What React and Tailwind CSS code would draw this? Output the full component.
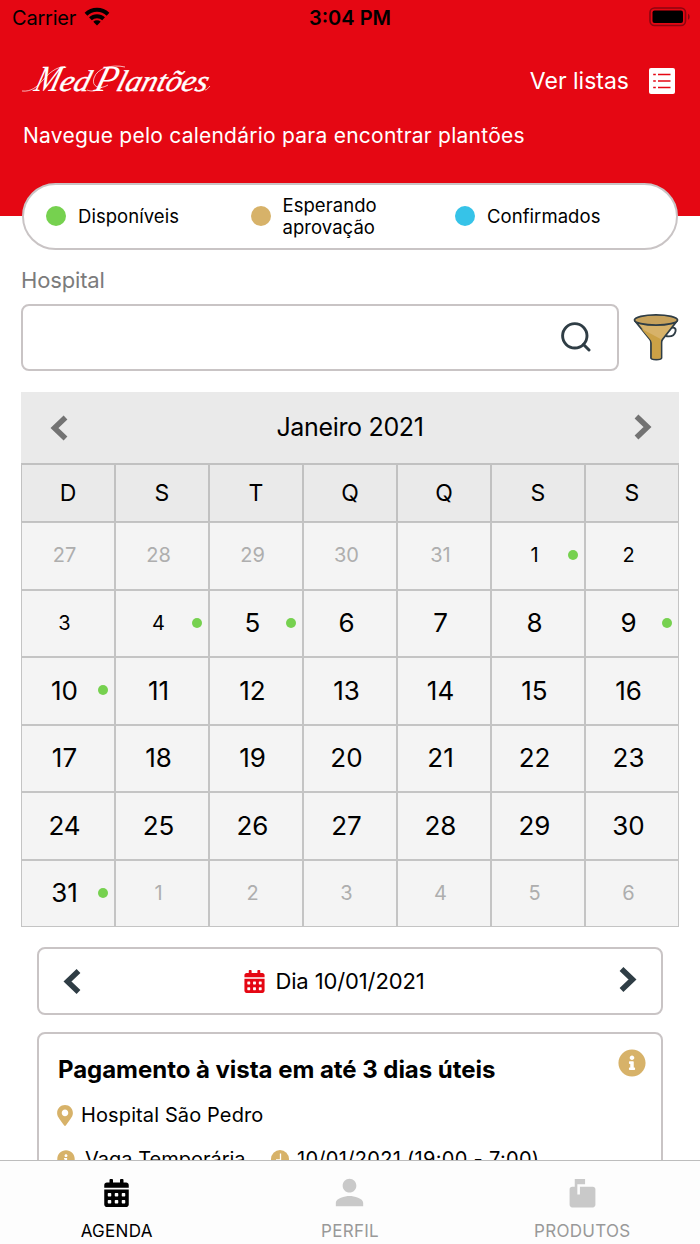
import { FaCalendarAlt, FaInfoCircle, FaMapMarkerAlt } from "react-icons/fa";
import { MdPerson, MdMarkunreadMailbox } from "react-icons/md";

const weekDays = ["D", "S", "T", "Q", "Q", "S", "S"];

const weeks = [
  [27, 28, 29, 30, 31, 1, 2],
  [3, 4, 5, 6, 7, 8, 9],
  [10, 11, 12, 13, 14, 15, 16],
  [17, 18, 19, 20, 21, 22, 23],
  [24, 25, 26, 27, 28, 29, 30],
  [31, 1, 2, 3, 4, 5, 6],
];

const available = [1, 4, 5, 9, 10, 31];

const days = weeks.flatMap((week, row) =>
  week.map((day) => {
    const outside = (row === 0 && day > 7) || (row === 5 && day < 7);
    return {
      day,
      outside,
      past: !outside && day < 5,
      dot: !outside && available.includes(day),
    };
  })
);

const legend = [
  { label: "Disponíveis", color: "bg-[#76d14f]" },
  { label: "Esperando aprovação", color: "bg-[#d7b269]" },
  { label: "Confirmados", color: "bg-[#36c3e8]" },
];

function Chevron({ right, className }) {
  return (
    <svg viewBox="0 0 18 26" fill="none" stroke="currentColor" strokeWidth="5.5" className={className}>
      <path d={right ? "M2.5 2.5 13.5 13 2.5 23.5" : "M15.5 2.5 4.5 13l11 10.5"} />
    </svg>
  );
}

function StatusBar() {
  return (
    <div className="grid h-9 grid-cols-3 items-center pl-3 pr-[9px] text-[20px] text-black">
      <div className="flex items-center gap-2">
        <span className="tracking-[-0.2px]">Carrier</span>
        <svg viewBox="0 0 26 19" className="mb-[3px] h-[19px] w-[26px]" fill="none" stroke="currentColor" strokeWidth="4">
          <path d="M2 7.2a16 16 0 0 1 22 0" />
          <path d="M6.4 11.8a9.6 9.6 0 0 1 13.2 0" />
          <path d="m13 18.6-3.7-3.8a5.4 5.4 0 0 1 7.4 0z" fill="currentColor" stroke="none" />
        </svg>
      </div>
      <span className="pr-[3px] text-center font-semibold">3:04 PM</span>
      <svg viewBox="0 0 42 20" className="mb-0.5 h-5 w-[42px] justify-self-end">
        <rect x="1" y="1" width="35.5" height="17.5" rx="4.5" fill="none" stroke="#8c0610" strokeWidth="1.6" />
        <rect x="3.5" y="3.5" width="30.5" height="12.5" rx="2" />
        <path d="M39 6.8c2.2 1.2 2.2 4.8 0 6z" fill="#8c0610" />
      </svg>
    </div>
  );
}

function Logo() {
  return (
    <svg viewBox="0 0 190 34" className="h-[34px] w-[190px] overflow-visible" fill="#fff">
      <g
        fontFamily="'Liberation Serif', serif"
        fontStyle="italic"
        fontSize="30"
        transform="translate(0 27) skewX(-16) translate(0 -27)"
      >
        <text x="11" y="27" fontSize="37" textLength="25" lengthAdjust="spacingAndGlyphs">M</text>
        <text x="36" y="27" textLength="30" lengthAdjust="spacingAndGlyphs" stroke="#fff" strokeWidth="0.4">ed</text>
        <text x="71" y="27" fontSize="37" textLength="22" lengthAdjust="spacingAndGlyphs">P</text>
        <text x="93" y="27" textLength="91" lengthAdjust="spacingAndGlyphs" stroke="#fff" strokeWidth="0.4">lantões</text>
      </g>
      <g fill="none" stroke="#fff" strokeWidth="0.7">
        <path d="M0 27c9 1 15-4 21-11S34 3 43 2.500" />
        <path d="M65 26c5 2 11 1 15-3M86 21c-8 5-17 2-14-7C75 4 90 0 103 3" />
        <path d="M183 26c2 0 3-2 5-4" />
      </g>
    </svg>
  );
}

function Funnel() {
  return (
    <svg viewBox="0 0 46 48" className="mb-0.5 h-12 w-[46px] shrink-0" stroke="#2f3d45" strokeWidth="1.8" strokeLinejoin="round">
      <path d="M37 15.500c3-1.800 6.500-1 5.500 3-1 4-5 5.500-10 4.500" fill="none" />
      <path d="m2 8 15 18.500c.8 1 1 2 1 3.500v15c0 2 10.500 2 10.500 0V30c0-1.500.2-2.500 1-3.500L44 8z" fill="#d7b269" />
      <path d="M8 15.500 17.700 27c.8 1 1.200 2 1.200 3.500V45c1 1 7.700 1 8.700 0V26z" fill="#cba146" stroke="none" />
      <ellipse cx="23" cy="7" rx="21.500" ry="5.200" fill="#c7a25c" />
    </svg>
  );
}

function Header() {
  return (
    <header className="h-[216px] shrink-0 bg-[#e50713] text-white">
      <StatusBar />
      <div className="flex h-[90px] items-center justify-between pl-[22px] pr-[25px]">
        <Logo />
        <div className="flex items-center gap-5">
          <span className="text-[23px]">Ver listas</span>
          <svg viewBox="0 0 26 26" className="size-[26px]">
            <rect width="26" height="26" rx="2" fill="#fff" />
            <path
              d="M4.200 6.500h2.600M9 6.500h12.500M4.200 13h2.600M9 13h12.500M4.200 19.500h2.600M9 19.500h12.500"
              stroke="#e50713"
              strokeWidth="1.500"
            />
          </svg>
        </div>
      </div>
      <p className="-mt-[5px] pl-[23px] text-[21px] leading-[30px] tracking-[0.24px]">
        Navegue pelo calendário para encontrar plantões
      </p>
    </header>
  );
}

function Legend() {
  return (
    <div className="mx-[22px] -mt-[33px] grid h-[67px] shrink-0 grid-cols-[204.5px_204.5px_1fr] items-center rounded-full border-2 border-[#c9c4c5] bg-white pb-px pl-[22px]">
      {legend.map(({ label, color }) => (
        <div key={label} className="flex items-center gap-3">
          <span className={`size-5 shrink-0 rounded-full ${color}`} />
          <span className="w-[116px] text-[18.500px] leading-[22px] tracking-[0.05px]">{label}</span>
        </div>
      ))}
    </div>
  );
}

function Search() {
  return (
    <section className="mt-[15px] shrink-0 pl-[21px] pr-[21px]">
      <label className="block text-[22px] leading-[30px] tracking-[-0.15px] text-[#7b7b7b]">Hospital</label>
      <div className="mt-[9px] flex items-center gap-[14px]">
        <div className="flex h-[67px] w-[598px] items-center justify-end rounded-lg border-2 border-[#c9c4c5] pr-[26px]">
          <svg viewBox="0 0 30 30" className="mb-0.5 size-[30px]" fill="none" stroke="#2f3d45" strokeLinecap="round">
            <circle cx="13.800" cy="13.800" r="12.200" strokeWidth="2.900" />
            <path d="m22.500 22.500 5.500 5.500" strokeWidth="3" />
          </svg>
        </div>
        <Funnel />
      </div>
    </section>
  );
}

function Calendar() {
  return (
    <section className="mx-[21px] mt-[21px] shrink-0">
      <div className="flex h-[71px] items-center justify-between bg-[#eaeaea] pl-[29px] pr-[27px] text-[#737373]">
        <Chevron className="h-[26px] w-[18px]" />
        <h2 className="mr-0.5 text-[25px] tracking-[-0.33px] text-black">Janeiro 2021</h2>
        <Chevron right className="mb-0.5 h-[26px] w-[18px]" />
      </div>
      <div className="grid h-[59px] grid-cols-7 border-t-2 border-[#c1c1c1] bg-[#eaeaea]">
        {weekDays.map((name, i) => (
          <div key={i} className="flex items-center justify-center border-x border-b border-[#c1c1c1] text-[23px]">
            {name}
          </div>
        ))}
      </div>
      <div className="grid auto-rows-[67.500px] grid-cols-7 bg-[#f4f4f4]">
        {days.map(({ day, outside, past, dot }, i) => (
          <div key={i} className="relative flex items-center justify-center border border-[#c4c4c4] pr-[7px] pb-px">
            <span className={outside ? "text-[20px] text-[#aeaeae]" : past ? "text-[20px]" : "text-[26px]"}>{day}</span>
            {dot && <span className="absolute right-[6px] size-[10px] rounded-full bg-[#76d14f]" />}
          </div>
        ))}
      </div>
    </section>
  );
}

function DayPicker() {
  return (
    <div className="mx-[37px] mt-5 flex h-[68px] shrink-0 items-center justify-between rounded-lg border-2 border-[#c9c4c5] px-6 text-[#2f3d45]">
      <Chevron className="h-[27px] w-[18px]" />
      <div className="mr-[31px] flex items-center gap-[10px]">
        <FaCalendarAlt className="h-[23px] w-[21px] text-[#e50713]" />
        <span className="text-[22px] tracking-[-0.12px] text-black">Dia 10/01/2021</span>
      </div>
      <Chevron right className="mb-1 h-[27px] w-[18px]" />
    </div>
  );
}

function ShiftCard() {
  return (
    <article className="mx-[37px] mt-[17px] h-[220px] shrink-0 rounded-lg border-2 border-[#c9c4c5] pl-[18px] pr-[15px] pt-[15px]">
      <div className="flex items-start justify-between">
        <h3 className="mt-[5px] pl-px text-[24px] leading-[32px] font-bold tracking-[-0.04px]">
          Pagamento à vista em até 3 dias úteis
        </h3>
        <FaInfoCircle className="size-7 text-[#d7b269]" />
      </div>
      <div className="mt-[14px] flex h-[30px] items-center gap-2 text-[20px] tracking-[0.12px]">
        <FaMapMarkerAlt className="h-[21px] w-4 text-[#d7b269]" />
        Hospital São Pedro
      </div>
      <div className="mt-[14px] flex h-[30px] items-center text-[20px]">
        <FaInfoCircle className="size-[18px] text-[#d7b269]" />
        <span className="ml-[10px] w-[186px]">Vaga Temporária</span>
        <svg viewBox="0 0 18 18" className="size-[18px]">
          <circle cx="9" cy="9" r="9" fill="#d7b269" />
          <path d="M9.500 3.500V10H5" fill="none" stroke="#fff" strokeWidth="1.300" />
        </svg>
        <span className="ml-2 tracking-[0.3px]">10/01/2021 (19:00 - 7:00)</span>
      </div>
    </article>
  );
}

function TabBar() {
  return (
    <nav className="grid h-[84px] shrink-0 grid-cols-3 border-t border-[#bdbdbd] bg-[#fdfdfd] text-[17px] tracking-[0.3px]">
      <div className="flex flex-col items-center pt-[18px]">
        <FaCalendarAlt className="h-7 w-[25px]" />
        <span className="mt-3">AGENDA</span>
      </div>
      <div className="flex flex-col items-center pt-[11px] text-[#c9c9c9]">
        <MdPerson className="size-[41px]" />
        <span className="mt-1.5 text-[#999]">PERFIL</span>
      </div>
      <div className="flex flex-col items-center pt-[18px] pr-0.5 text-[#c9c9c9]">
        <MdMarkunreadMailbox className="size-[31px]" />
        <span className="mt-[9px] text-[#999]">PRODUTOS</span>
      </div>
    </nav>
  );
}

export default function App() {
  return (
    <div className="flex h-[1244px] w-[700px] flex-col overflow-hidden bg-white font-[Inter,sans-serif] text-black">
      <main className="flex min-h-0 flex-1 flex-col overflow-hidden">
        <Header />
        <Legend />
        <Search />
        <Calendar />
        <DayPicker />
        <ShiftCard />
      </main>
      <TabBar />
    </div>
  );
}
